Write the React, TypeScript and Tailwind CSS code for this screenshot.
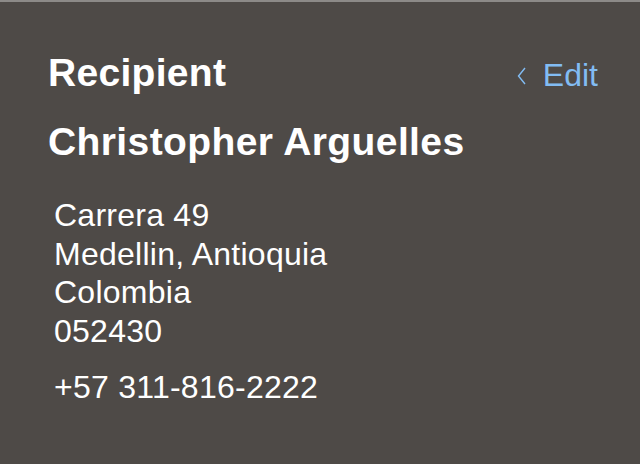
export default function App() {
  return (
    <div
      className="w-[640px] h-[464px] bg-[#4e4a47] border-t-2 border-[#8c8a88] text-white overflow-hidden"
      style={{ fontFamily: '"Liberation Sans", Arial, sans-serif' }}
    >
      <div className="pl-[48px] pr-[42px] pt-[51px]">
        {/* HEADER */}
        <div className="flex items-baseline justify-between">
          <h1 className="text-[39px] leading-none font-bold tracking-[0.3px]">Recipient</h1>
          <button className="flex items-baseline text-[32px] leading-none text-[#82bcf3]">
            <svg width="9" height="18" viewBox="0 0 9 18" className="mr-[17px] self-center mt-[2px]">
              <polyline points="8,1 1.5,9 8,17" fill="none" stroke="#82bcf3" strokeWidth="1.4" />
            </svg>
            Edit
          </button>
        </div>

        {/* NAME */}
        <h2 className="mt-[30px] text-[39px] leading-none font-bold tracking-[0.4px]">
          Christopher Arguelles
        </h2>

        {/* ADDRESS */}
        <div className="mt-[35px] pl-[6px] text-[32px] leading-[38.5px] tracking-[0.25px]">
          <p>Carrera 49</p>
          <p>Medellin, Antioquia</p>
          <p>Colombia</p>
          <p>052430</p>
          <p className="mt-[18px]">+57 311-816-2222</p>
        </div>
      </div>
    </div>
  );
}
